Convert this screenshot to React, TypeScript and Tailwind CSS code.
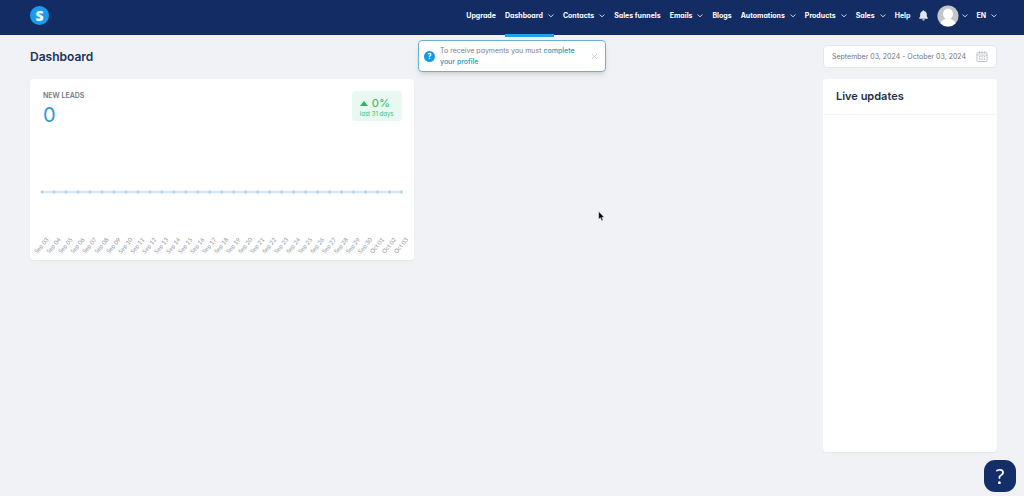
import React from "react";

const navItems: { label: string; menu?: boolean; active?: boolean }[] = [
  { label: "Upgrade" },
  { label: "Dashboard", menu: true, active: true },
  { label: "Contacts", menu: true },
  { label: "Sales funnels" },
  { label: "Emails", menu: true },
  { label: "Blogs" },
  { label: "Automations", menu: true },
  { label: "Products", menu: true },
  { label: "Sales", menu: true },
  { label: "Help" },
];

const days = Array.from({ length: 31 }, (_, i) =>
  i < 28 ? `Sep ${String(i + 3).padStart(2, "0")}` : `Oct ${String(i - 27).padStart(2, "0")}`
);

function Chevron() {
  return (
    <svg className="h-1 w-[6px] shrink-0" viewBox="0 0 6 4" fill="none" stroke="#c3cde2" strokeWidth="1" strokeLinecap="round" aria-hidden="true">
      <path d="M0.8 0.8 3 2.8 5.2 0.8" />
    </svg>
  );
}

function Header() {
  return (
    <header className="flex h-[35px] items-center justify-between bg-[#132c64] pr-[27px] pl-[30px] text-white">
      <a
        href="#home"
        aria-label="Home"
        className="-mt-1 flex size-[19px] items-center justify-center rounded-full bg-[#179cf3] font-['Open_Sans',sans-serif] text-[14px] leading-none font-extrabold"
      >
        S
      </a>
      <nav className="-mt-1 flex h-full items-center gap-[9px] text-[7px] leading-3 font-bold whitespace-nowrap" aria-label="Main">
        {navItems.map((item) => (
          <a
            key={item.label}
            href={"#" + item.label.toLowerCase().replace(" ", "-")}
            className={
              "relative flex h-full items-center gap-[5px] " +
              (item.active ? "after:absolute after:inset-x-0 after:-bottom-1 after:h-[3px] after:bg-[#259fec]" : "")
            }
          >
            {item.label}
            {item.menu && <Chevron />}
          </a>
        ))}
        <button type="button" aria-label="Notifications">
          <svg className="h-[11px] w-[9px]" viewBox="0 0 9 11" fill="#dfe5f1" aria-hidden="true">
            <path d="M4.5 0.3C4 0.3 3.8 0.6 3.8 1C2.2 1.3 1.2 2.6 1.2 4.4C1.2 6.4 0.9 7 0.3 7.6C-0.1 8.1 0.1 8.7 0.8 8.7H8.2C8.9 8.7 9.1 8.1 8.7 7.6C8.1 7 7.8 6.4 7.8 4.4C7.8 2.6 6.8 1.3 5.2 1C5.2 0.6 5 0.3 4.5 0.3ZM3.2 9.3C3.3 10.1 3.8 10.6 4.5 10.6C5.2 10.6 5.7 10.1 5.8 9.3Z" />
          </svg>
        </button>
        <div className="flex items-center gap-2">
          <button type="button" aria-label="Account" className="flex items-center gap-[3px]">
            <svg className="size-[22px]" viewBox="0 0 22 22" aria-hidden="true">
              <clipPath id="avatar-clip">
                <circle cx="11" cy="11" r="10.6" />
              </clipPath>
              <g clipPath="url(#avatar-clip)">
                <rect width="22" height="22" fill="#c5c6c8" />
                <ellipse cx="11" cy="9" rx="5" ry="5.4" fill="#fff" />
                <path d="M3 22C3 16.8 5.5 14.6 9 14V12H13V14C16.5 14.6 19 16.8 19 22Z" fill="#fff" />
              </g>
            </svg>
            <Chevron />
          </button>
          <button type="button" className="flex items-center gap-[5px]">
            EN
            <Chevron />
          </button>
        </div>
      </nav>
    </header>
  );
}

function Notice() {
  return (
    <div
      role="status"
      className="absolute top-10 left-1/2 flex w-[188px] -translate-x-1/2 items-center gap-[5px] rounded-[4px] border border-[#69b2d3] bg-white py-1 pr-[7px] pl-[5px] shadow-md"
    >
      <span
        aria-hidden="true"
        className="flex size-[11px] shrink-0 items-center justify-center rounded-full bg-[#139bea] text-[7px] leading-none font-bold text-white"
      >
        ?
      </span>
      <p className="flex-1 text-[7px] leading-[11px] text-[#777e88]">
        To receive payments you must{" "}
        <a href="#profile" className="font-medium text-[#299bbd]">
          complete your profile
        </a>
      </p>
      <button type="button" aria-label="Close" className="shrink-0">
        <svg className="size-[7px]" viewBox="0 0 7 7" stroke="#bec3ca" strokeWidth="0.8" aria-hidden="true">
          <path d="M1 1 6 6M6 1 1 6" />
        </svg>
      </button>
    </div>
  );
}

function LeadsChart() {
  return (
    <svg className="mt-auto block w-full" viewBox="0 0 384 80" role="img" aria-label="New leads per day">
      <path d="M12 12H372" stroke="#d6e8f5" strokeWidth="2.4" />
      {days.map((day, i) => (
        <g key={day}>
          <circle cx={12 + i * 12} cy="12" r="1.5" fill="#b6d3e6" />
          <text
            x={19 + i * 12}
            y="60"
            textAnchor="end"
            fontSize="6"
            fill="#8f9398"
            fontFamily="Lato, sans-serif"
            transform={`rotate(-50 ${19 + i * 12} 60)`}
          >
            {day}
          </text>
        </g>
      ))}
    </svg>
  );
}

function LeadsCard() {
  return (
    <section className="flex min-h-[181px] flex-col self-start rounded-[4px] bg-white shadow-xs">
      <div className="flex items-start justify-between px-3 pt-3">
        <div className="pl-px">
          <h2 className="text-[7px] leading-[10px] font-semibold text-[#727a84]">NEW LEADS</h2>
          <p className="text-[20px] leading-7 text-[#2c98cc]">0</p>
        </div>
        <div className="rounded-[3px] bg-[#e7f9f0] px-2 pt-[6px] pb-1 text-[#47b975]">
          <p className="flex items-center gap-1 text-[11px] leading-[13px] font-medium">
            <svg className="h-[5px] w-2" viewBox="0 0 8 5" fill="#2fb469" aria-hidden="true">
              <path d="M4 0 8 5H0Z" />
            </svg>
            0%
          </p>
          <p className="text-[6px] leading-[7px]">last 31 days</p>
        </div>
      </div>
      <LeadsChart />
    </section>
  );
}

function DateRange() {
  return (
    <label className="flex h-[23px] w-[174px] items-center rounded-[4px] border border-[#e2e5ea] bg-white px-2">
      <span className="hidden">Date range</span>
      <input
        type="text"
        readOnly
        aria-label="Date range"
        defaultValue="September 03, 2024 - October 03, 2024"
        className="h-full min-w-0 flex-1 bg-transparent text-[7px] leading-3 text-[#6f747b] outline-none"
      />
      <svg className="h-[11px] w-3 shrink-0" viewBox="0 0 12 11" fill="none" stroke="#b3b7bd" strokeWidth="0.8" aria-hidden="true">
        <rect x="0.9" y="1.6" width="10.2" height="8.9" rx="0.8" />
        <path d="M1 4H11M3.5 0.4V2.6M6 0.4V2.6M8.5 0.4V2.6" />
        <path d="M3 5.8H9.4M3 8.1H9.4" strokeWidth="1.1" strokeDasharray="1.4 1" />
      </svg>
    </label>
  );
}

export default function App() {
  return (
    <div className="relative min-h-screen bg-[#f0f2f6] font-['Inter',sans-serif] [font-feature-settings:'cv11']">
      <Header />
      <Notice />
      <main className="pt-[10px] pr-[27px] pb-11 pl-[30px]">
        <div className="flex items-center justify-between">
          <h1 className="text-[12px] leading-4 font-semibold text-[#20315a] [font-feature-settings:normal]">Dashboard</h1>
          <DateRange />
        </div>
        <div className="mt-[11px] grid grid-cols-[1fr_1fr_174px] gap-[13px]">
          <LeadsCard />
          <aside className="col-start-3 min-h-[373px] rounded-[4px] bg-white shadow-xs">
            <h2 className="border-b border-[#f3f4f6] px-[13px] pt-[9px] pb-[10px] text-[11px] leading-4 font-semibold text-[#1e2f48] [font-feature-settings:normal]">
              Live updates
            </h2>
          </aside>
        </div>
      </main>
      <button
        type="button"
        aria-label="Help"
        className="fixed right-2 bottom-1 flex size-8 items-center justify-center rounded-[11px] bg-[#142e68] font-['Lato',sans-serif] text-[22px] leading-none font-normal text-white"
      >
        ?
      </button>
      <svg className="pointer-events-none absolute top-[211px] left-[598px] h-[11px] w-[7px]" viewBox="0 0 7 11" aria-hidden="true">
        <path d="M0.7 0.6V8.2L2.4 6.7L3.7 9.8L5 9.2L3.8 6.3H6.2Z" fill="#050505" stroke="#fff" strokeWidth="0.4" />
      </svg>
    </div>
  );
}
